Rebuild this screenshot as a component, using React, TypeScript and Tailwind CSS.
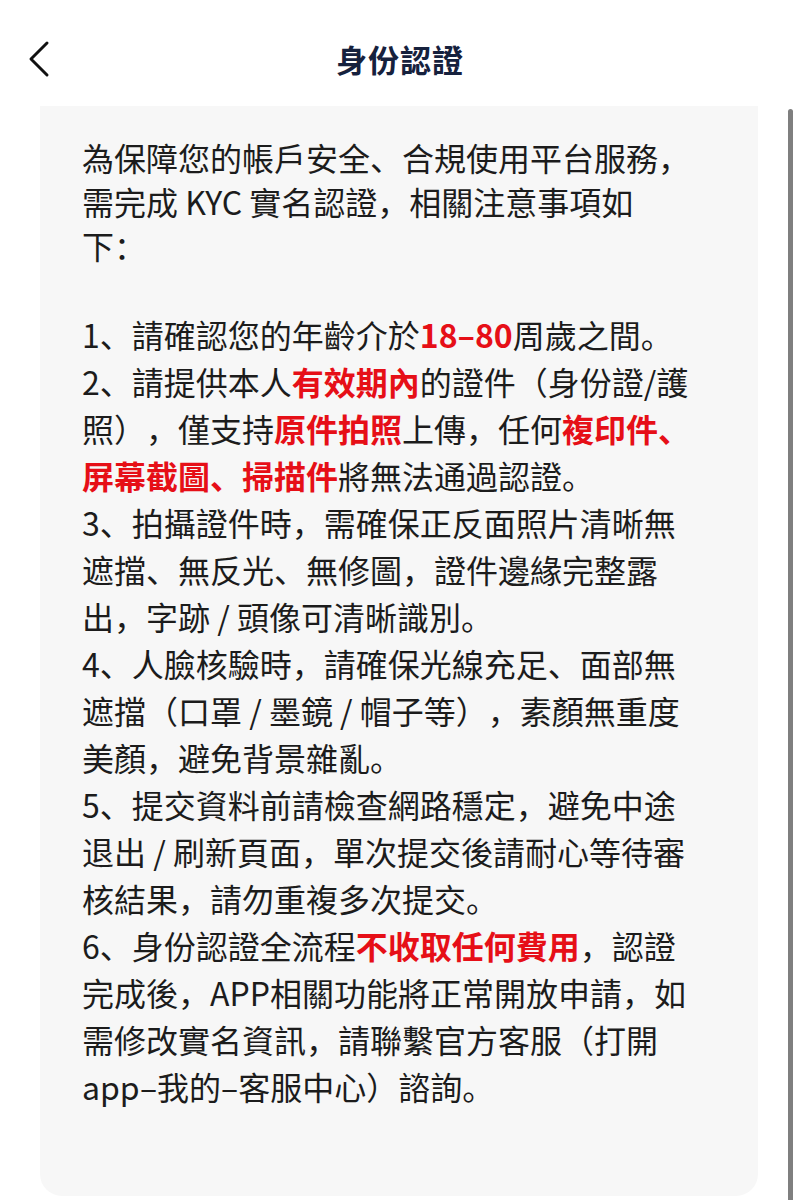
import React from 'react';

const Red: React.FC<{ children: React.ReactNode }> = ({ children }) => (
    <span className="font-bold text-[#e60f17]">{children}</span>
);

const Line: React.FC<{ children: React.ReactNode }> = ({ children }) => (
    <div className="whitespace-nowrap">{children}</div>
);

export default function App() {
    return (
        <div
            className="relative h-[1200px] w-[800px] overflow-hidden bg-white text-[#1c1c1c] [text-spacing-trim:space-all]"
            style={{ fontFamily: '"Noto Sans CJK SC", "Noto Sans", sans-serif' }}
        >
            {/* Header */}
            <div className="relative flex h-[106px] items-center justify-center pt-[10px]">
                <button className="absolute left-[26px] top-[40px] p-0">
                    <svg width="26" height="38" viewBox="0 0 26 38" fill="none">
                        <path d="M21 3 L5 19 L21 35" stroke="#111" strokeWidth="3" strokeLinecap="round" strokeLinejoin="round" />
                    </svg>
                </button>
                <h1 className="text-[31px] font-bold leading-none tracking-[1px] text-[#16213d]">身份認證</h1>
            </div>

            {/* Card */}
            <div className="ml-[40px] h-[1090px] w-[718px] rounded-b-[22px] bg-[#f7f7f7] pl-[42px] pr-[40px] pt-[29px] text-[32px]">
                <div className="leading-[44px]">
                    <Line>為保障您的帳戶安全、合規使用平台服務，</Line>
                    <Line>需完成 KYC 實名認證，相關注意事項如</Line>
                    <Line>下：</Line>
                </div>
                <div className="mt-[44px] leading-[47px]">
                    <Line>1、請確認您的年齡介於<Red>18–80</Red>周歲之間。</Line>
                    <Line>2、請提供本人<Red>有效期內</Red>的證件（身份證/護</Line>
                    <Line>照），僅支持<Red>原件拍照</Red>上傳，任何<Red>複印件、</Red></Line>
                    <Line><Red>屏幕截圖、掃描件</Red>將無法通過認證。</Line>
                    <Line>3、拍攝證件時，需確保正反面照片清晰無</Line>
                    <Line>遮擋、無反光、無修圖，證件邊緣完整露</Line>
                    <Line>出，字跡 / 頭像可清晰識別。</Line>
                    <Line>4、人臉核驗時，請確保光線充足、面部無</Line>
                    <Line>遮擋（口罩 / 墨鏡 / 帽子等），素顏無重度</Line>
                    <Line>美顏，避免背景雜亂。</Line>
                    <Line>5、提交資料前請檢查網路穩定，避免中途</Line>
                    <Line>退出 / 刷新頁面，單次提交後請耐心等待審</Line>
                    <Line>核結果，請勿重複多次提交。</Line>
                    <Line>6、身份認證全流程<Red>不收取任何費用</Red>，認證</Line>
                    <Line>完成後，APP相關功能將正常開放申請，如</Line>
                    <Line>需修改實名資訊，請聯繫官方客服（打開</Line>
                    <Line>app–我的–客服中心）諮詢。</Line>
                </div>
            </div>

            {/* Scrollbar */}
            <div className="absolute right-[7px] top-[109px] h-[1100px] w-[5px] rounded-full bg-[#7f7f7f]" />
        </div>
    );
}
